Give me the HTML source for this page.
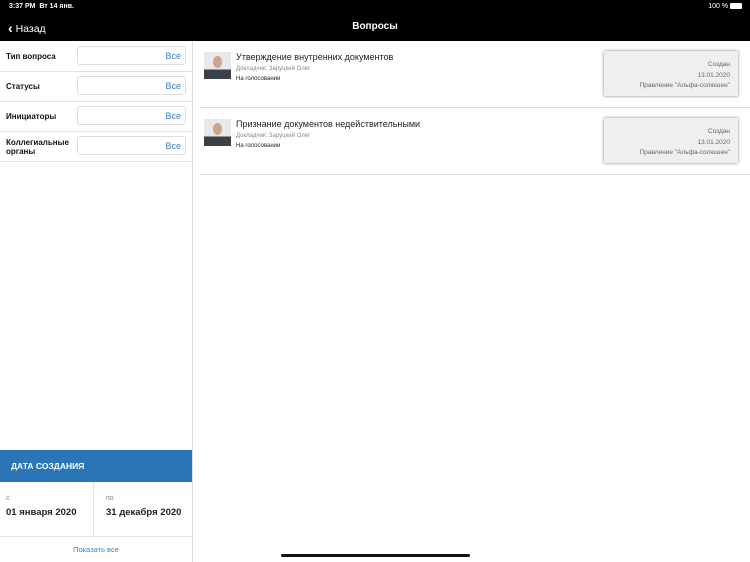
<!DOCTYPE html><html><head><meta charset="utf-8"><style>
body{margin:0;width:750px;height:562px;position:relative;overflow:hidden;background:#fff;font-family:"Liberation Sans","DejaVu Sans",sans-serif}
.a{position:absolute}
.top{left:0;top:0;width:750px;height:41px;background:#000;color:#fff}
.row{left:0;width:192px;height:30px;border-bottom:1px solid #e2e2e2}
.lbl{left:6px;font-size:8px;font-weight:bold;color:#111}
.inp{left:77px;width:109px;height:19px;border:1px solid #ddd;border-radius:3px;top:5px;font-size:9px;color:#3a7fc1;text-align:right;box-sizing:border-box;padding:4px 4px 0 0}
.ava{left:204px;width:27px;height:27px;background:linear-gradient(#e8e8e8 65%,#3a4048 65%);overflow:hidden}
.ava:before{content:"";position:absolute;left:9px;top:4px;width:9px;height:12px;border-radius:50%;background:#c9a48e}
.card{left:604px;width:134px;height:45px;background:#efefef;box-shadow:0 0 3px rgba(0,0,0,.5);font-size:6.5px;color:#666;text-align:right}
</style></head><body>
<div class="a top">
<div class="a" style="left:9px;top:3px;font-size:7px;font-weight:bold">3:37 PM&nbsp; Вт 14 янв.</div>
<div class="a" style="right:8px;top:3px;font-size:7px">100 % <span style="display:inline-block;width:12px;height:6px;background:#fff;border-radius:1px;vertical-align:middle"></span></div>
<div class="a" style="left:8px;top:19px;font-size:10.5px"><span style="font-size:14px;font-weight:bold;position:relative;top:1px">&lsaquo;</span> Назад</div>
<div class="a" style="left:0;width:750px;top:21px;text-align:center;font-size:10px;font-weight:bold">Вопросы</div>
</div>
<div class="a" style="left:192px;top:41px;width:1px;height:521px;background:#ddd"></div>
<div class="a row" style="top:41px"><div class="a lbl" style="top:11px">Тип вопроса</div><div class="a inp">Все</div></div>
<div class="a row" style="top:71px"><div class="a lbl" style="top:11px">Статусы</div><div class="a inp">Все</div></div>
<div class="a row" style="top:101px"><div class="a lbl" style="top:11px">Инициаторы</div><div class="a inp">Все</div></div>
<div class="a row" style="top:131px"><div class="a lbl" style="top:7px;line-height:9px">Коллегиальные<br>органы</div><div class="a inp">Все</div></div>
<div class="a" style="left:0;top:450px;width:192px;height:32px;background:#2a75b8;color:#fff;font-size:8.5px;font-weight:bold;line-height:32px;padding-left:11px;box-sizing:border-box">ДАТА СОЗДАНИЯ</div>
<div class="a" style="left:93px;top:482px;width:1px;height:54px;background:#e2e2e2"></div>
<div class="a" style="left:0;top:536px;width:192px;height:1px;background:#e2e2e2"></div>
<div class="a" style="left:6px;top:495px;font-size:7px;color:#888">с</div>
<div class="a" style="left:6px;top:507px;font-size:9.5px;font-weight:bold;color:#222">01 января 2020</div>
<div class="a" style="left:106px;top:495px;font-size:7px;color:#888">по</div>
<div class="a" style="left:106px;top:507px;font-size:9.5px;font-weight:bold;color:#222">31 декабря 2020</div>
<div class="a" style="left:0;width:192px;top:545px;text-align:center;font-size:7.5px;color:#3a7fc1">Показать все</div>
<div class="a ava" style="top:52px"></div>
<div class="a" style="left:236px;top:52px;font-size:9px;color:#222">Утверждение внутренних документов</div>
<div class="a" style="left:236px;top:66px;font-size:6px;color:#888">Докладчик: Заруцкий Олег</div>
<div class="a" style="left:236px;top:76px;font-size:6px;color:#222">На голосовании</div>
<div class="a card" style="top:51px"><div style="padding:9px 8px 0 0;line-height:10.5px">Создан<br>13.01.2020<br>Правление "Альфа-солюшен"</div></div>
<div class="a" style="left:200px;top:107px;width:550px;height:1px;background:#ddd"></div>
<div class="a ava" style="top:119px"></div>
<div class="a" style="left:236px;top:119px;font-size:9px;color:#222">Признание документов недействительными</div>
<div class="a" style="left:236px;top:133px;font-size:6px;color:#888">Докладчик: Заруцкий Олег</div>
<div class="a" style="left:236px;top:143px;font-size:6px;color:#222">На голосовании</div>
<div class="a card" style="top:118px"><div style="padding:9px 8px 0 0;line-height:10.5px">Создан<br>13.01.2020<br>Правление "Альфа-солюшен"</div></div>
<div class="a" style="left:200px;top:174px;width:550px;height:1px;background:#ddd"></div>
<div class="a" style="left:281px;top:554px;width:189px;height:3px;border-radius:2px;background:#111"></div>
</body></html>
